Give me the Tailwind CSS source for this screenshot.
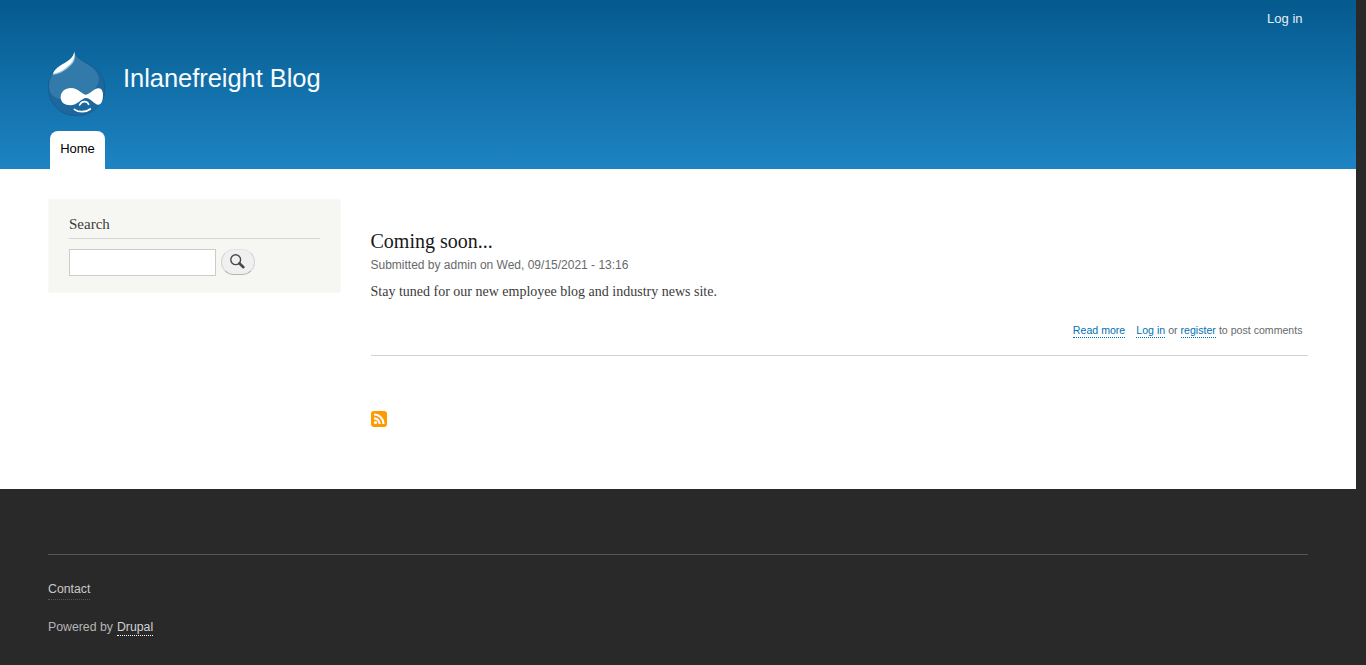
<!DOCTYPE html>
<html lang="en">
<head>
<meta charset="utf-8">
<title>Inlanefreight Blog</title>
<script src="https://cdn.jsdelivr.net/npm/@tailwindcss/browser@4"></script>
</head>
<body class="h-[665px] w-[1366px] overflow-hidden bg-[#292929] font-['Liberation_Sans',sans-serif]">
<div class="flex h-[665px] w-[1356px] flex-col">
  <header class="flex h-[169px] shrink-0 flex-col bg-linear-to-b from-[#055a8e] to-[#1d84c3] pl-12">
    <nav class="flex h-[42px] justify-end pt-[9px] pr-[53.5px] text-[13px] leading-5 text-[#e6eff4]"><a>Log in</a></nav>
    <div class="flex h-[89px]">
      <svg class="mt-[3px] -ml-2 h-[75px] w-[75px] shrink-0" viewBox="0 0 225 225">
        <path d="M104 20C108 38 133 51 153 61C179 77 195 103 195 130C195 177 157 212 110 212C60 212 25 176 25 128C25 99 38 75 66 59C87 47 101 40 104 20Z" fill="#1c679c" stroke="#15598b" stroke-width="2"/>
        <path d="M104 22C107 40 130 51 149 62C174 79 183 101 171 122C157 147 122 163 88 164C54 166 28 155 27 126C27 100 40 77 66 61C87 49 100 42 104 22Z" fill="#327aaa"/>
        <path d="M103 20C101 39 84 48 68 57C51 67 40 78 38 89C56 88 75 77 88 65C102 54 108 41 103 20Z" fill="#9bc5df"/>
        <path d="M103 20C100 39 83 49 68 58C51 68 41 79 40 86C58 84 75 72 84 63C97 53 106 39 103 20Z" fill="#fff"/>
        <path d="M62 157C62 140 75 129 93 129C114 129 126 149 138 149C150 149 160 130 176 130C185 130 190 140 189 153C188 168 184 179 175 179C163 179 151 159 138 159C125 159 112 181 91 181C74 181 62 172 62 157Z" fill="#fff"/>
        <path d="M119 180C125 168 140 166 146 178M103 193C116 203 139 202 151 192" fill="none" stroke="#fff" stroke-width="5" stroke-linecap="round"/>
      </svg>
      <h1 class="ml-2 pt-[18px] text-[25.5px] leading-9 tracking-[-0.05px] whitespace-nowrap text-[#f8fbfd]">Inlanefreight Blog</h1>
    </div>
    <div class="ml-0.5 h-[38px] w-[55px] rounded-t-[8px] bg-white pt-2 text-center text-[13px] leading-5 text-black">Home</div>
  </header>
  <main class="flex h-80 shrink-0 bg-white pl-12">
    <aside class="mt-[30px] h-[94px] w-[293px] shrink-0 border border-[#f9f9f9] bg-[#f6f6f2] px-5 pt-[14px]">
      <h2 class="h-[25px] border-b border-[#d6d6d6] font-['Liberation_Serif',serif] text-[15px] leading-[20px] text-[#3b3b3b]">Search</h2>
      <div class="mt-2.5 flex gap-[5px]">
        <input class="h-[27px] w-[147px] border border-[#ccc] bg-white" aria-label="Search">
        <button class="h-[26px] w-[34px] rounded-[13px] border border-[#e4e4e4] border-r-[#d2d2d2] border-b-[#b4b4b4] border-l-[#d2d2d2] bg-[#f0f0f0]" aria-label="Search">
          <svg class="mt-[-1px] ml-2 h-4 w-4" viewBox="0 0 16 16" fill="none" stroke="#494949"><circle cx="5.7" cy="5.7" r="4.9" stroke-width="1.4"/><path d="M9.3 9.3L13.4 13.2" stroke-width="2.6" stroke-linecap="round"/></svg>
        </button>
      </div>
    </aside>
    <section class="ml-[29.5px] w-[937.5px] pt-[59px]">
      <h2 class="h-[27px] font-['Liberation_Serif',serif] text-[20px] leading-[27px] text-[#181818]">Coming soon...</h2>
      <p class="h-[21px] text-[12px] leading-5 text-[#68696b]">Submitted by admin on Wed, 09/15/2021 - 13:16</p>
      <p class="mt-[5px] h-[22px] font-['Liberation_Serif',serif] text-[14px] leading-[21px] text-[#3b3b3b]">Stay tuned for our new employee blog and industry news site.</p>
      <div class="ml-[0.5px] flex h-[53px] justify-end border-b border-[#d3d3d3] pt-5 pr-[5.5px] text-[10.6px] leading-[14px] text-[#68696b]">
        <a class="mr-[11px] h-[15px] border-b border-dotted border-[#0071b3] text-[#0071b3]">Read more</a>
        <p class="flex gap-[3px]"><a class="h-[15px] border-b border-dotted border-[#0071b3] text-[#0071b3]">Log in</a><span>or</span><a class="h-[15px] border-b border-dotted border-[#0071b3] text-[#0071b3]">register</a><span>to post comments</span></p>
      </div>
      <svg class="mt-[55px] ml-[0.5px] h-4 w-4" viewBox="0 0 16 16"><rect width="16" height="16" rx="3" fill="#ff9900"/><g fill="none" stroke="#fff" stroke-width="2.2"><path d="M3 7.3A5.7 5.7 0 0 1 8.7 13M3 3.5A9.5 9.5 0 0 1 12.5 13"/></g><circle cx="4.5" cy="11.5" r="1.6" fill="#fff"/></svg>
    </section>
  </main>
  <footer class="px-12 pt-[65px] text-[12.3px] leading-5 text-[#b5b5b5]">
    <div class="flex h-[111px] w-[1260px] flex-col items-start border-t border-[#555] pt-6">
      <a class="h-[21px] border-b border-dotted border-[#555] text-[#c8c8c8]">Contact</a>
      <p class="mt-[17px] flex gap-1"><span>Powered by</span><a class="h-[19px] border-b border-dotted border-white text-[#d2d2d2]">Drupal</a></p>
    </div>
  </footer>
</div>
</body>
</html>
